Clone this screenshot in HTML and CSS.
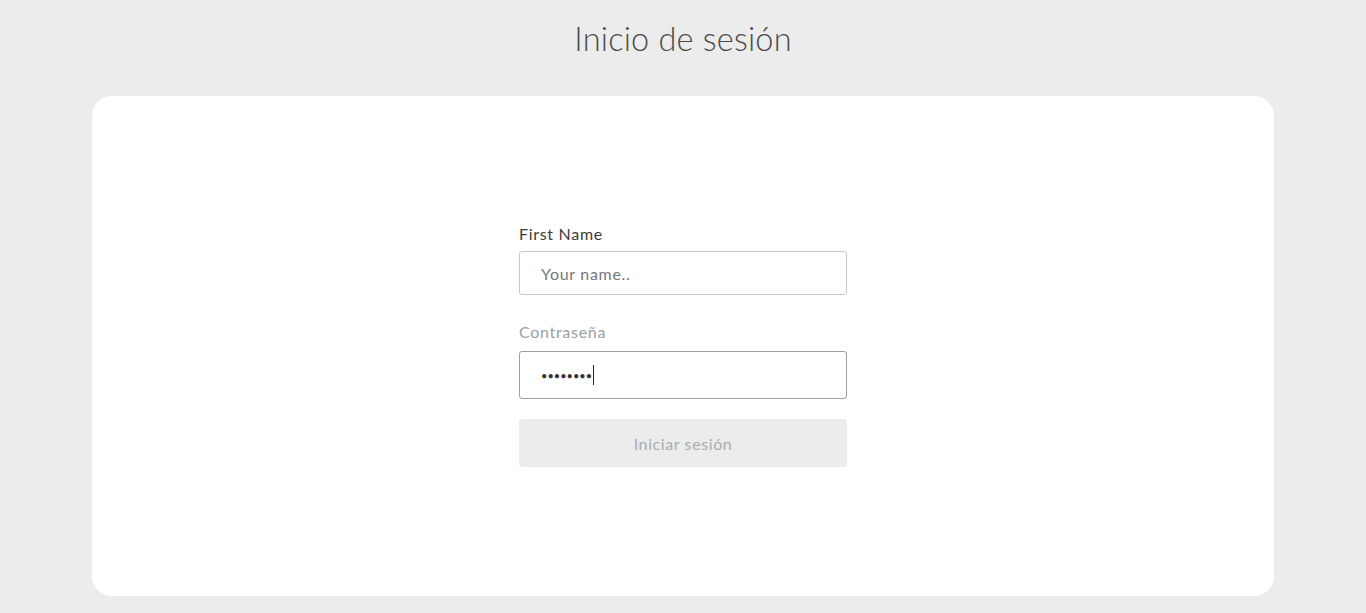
FILE: index.html
```html
<!DOCTYPE html>
<html lang="es">
<head>
<meta charset="utf-8">
<title>Inicio de sesión</title>
<link rel="stylesheet" href="styles.css">
</head>
<body>
<main class="page">
  <h1 class="title">Inicio de sesión</h1>
  <section class="card">
    <form class="form">
      <label class="label label-dark" for="name">First Name</label>
      <input class="input input-name" id="name" type="text" placeholder="Your name..">
      <label class="label label-muted" for="pass">Contraseña</label>
      <div class="input input-pass">
        <span class="dots">••••••••</span><span class="caret"></span>
      </div>
      <button class="button" type="button">Iniciar sesión</button>
    </form>
  </section>
</main>
</body>
</html>
```

FILE: styles.css
```css
* { box-sizing: border-box; }
html, body { margin: 0; padding: 0; }
body {
  background: #ebeceb;
  font-family: "Lato", sans-serif;
  color: #444;
  height: 613px;
  overflow: hidden;
}
.page {
  display: flex;
  flex-direction: column;
  align-items: center;
}
.title {
  margin: 18px 0 0;
  height: 78px;
  font-family: "Lato", sans-serif;
  font-weight: 300;
  font-size: 32.5px;
  line-height: 42px;
  color: #4a4a4a;
  letter-spacing: 0.2px;
}
.card {
  width: 1182px;
  height: 500px;
  background: #fff;
  border-radius: 20px;
  display: flex;
  justify-content: center;
  padding-top: 128px;
}
.form {
  width: 328px;
  display: flex;
  flex-direction: column;
}
.label {
  font-size: 16px;
  line-height: 20px;
  margin-bottom: 7px;
  letter-spacing: 0.7px;
  font-family: "Lato", sans-serif;
}
.label-dark { color: #3b3b3b; }
.label-muted { color: #9aa0a6; margin-top: 27px; margin-bottom: 9px; }
.input {
  width: 328px;
  border: 1px solid #c8c8c8;
  border-radius: 3px;
  background: #fff;
  font-family: "Lato", sans-serif;
  font-size: 16px;
  letter-spacing: 0.7px;
  padding: 0 21px;
  outline: none;
}
.input-name { height: 44px; color: #444; }
.input-name::placeholder { color: #777; }
.input-pass {
  height: 48px;
  border-color: #9e9e9e;
  display: flex;
  align-items: center;
  color: #333;
}
.dots { font-size: 11px; letter-spacing: 0; }
.caret {
  display: inline-block;
  width: 1px;
  height: 20px;
  background: #222;
  margin-left: 1px;
}
.button {
  margin-top: 20px;
  height: 48px;
  border: none;
  border-radius: 3px;
  background: #ebeceb;
  color: #a9adb0;
  font-family: "Lato", sans-serif;
  font-size: 16px;
  letter-spacing: 0.6px;
}
```
